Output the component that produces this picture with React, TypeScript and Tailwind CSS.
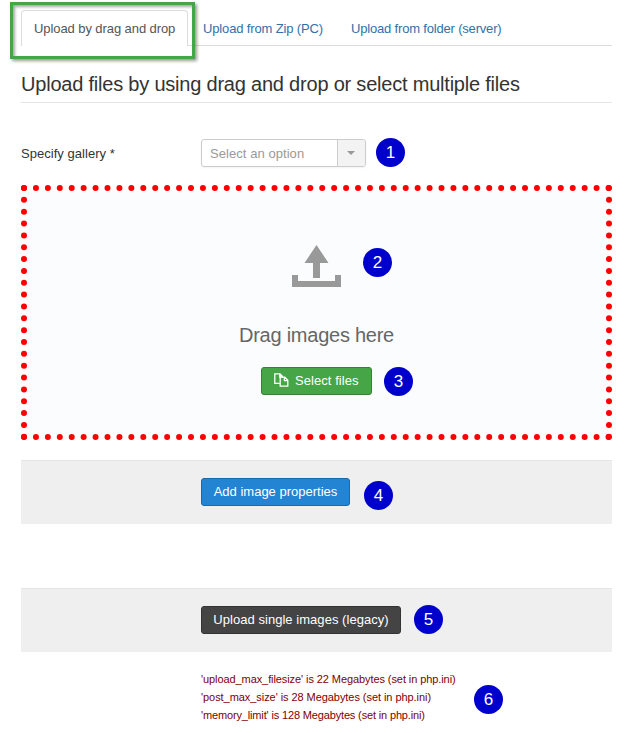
import React from "react";

function Badge({ n, className }: { n: number; className: string }) {
  return (
    <span
      className={`absolute flex size-[29px] items-center justify-center rounded-full bg-[#0000cc] text-[17px] leading-[29px] text-white ${className}`}
    >
      {n}
    </span>
  );
}

function UploadIcon() {
  return (
    <svg width="49" height="42" viewBox="0 0 49 42" fill="#999999" className="block">
      <path d="M24.5 0 36.5 18H28V33H21V18H12.5Z" />
      <path d="M0 30H6V36H43V30H49V42H0Z" />
    </svg>
  );
}

function FilesIcon() {
  return (
    <svg width="15" height="14" viewBox="0 0 15 14" fill="none" stroke="white" strokeWidth="1.3" className="block -translate-y-px">
      <path d="M5.8 10.4H.8V.8H6L8.8 3.6M5.8 .8V4H8.8" />
      <path d="M6.2 4.2H10.8L13.8 7.2V13.2H6.2ZM10.4 4.2V7.6H13.8" />
    </svg>
  );
}

export default function App() {
  return (
    <div className="relative h-[733px] w-[627px] overflow-hidden bg-white pl-[21px] pt-[10px] font-['Liberation_Sans',Arial,sans-serif] text-[13px] leading-[18px] text-[#333]">
      <div className="w-[591px]">
        <nav className="flex h-9 border-b border-[#ddd]">
          <div className="h-9 w-[167px] rounded-t border border-b-0 border-[#ddd] bg-white pl-3 pt-[9px] tracking-[-0.08px] whitespace-nowrap text-[#555]">
            Upload by drag and drop
          </div>
          <div className="ml-[15px] w-[148px] pt-[10px] tracking-[-0.14px] whitespace-nowrap text-[#3071a9]">
            Upload from Zip (PC)
          </div>
          <div className="pt-[10px] tracking-[-0.18px] whitespace-nowrap text-[#3071a9]">Upload from folder (server)</div>
        </nav>
        <h1 className="mt-[18px] h-[39px] border-b border-[#e5e5e5] text-[20px] leading-[40px] tracking-[-0.21px] whitespace-nowrap">
          Upload files by using drag and drop or select multiple files
        </h1>
        <div className="mt-9 flex h-[28px]">
          <label className="w-[180px] pt-[6px] tracking-[0.04px]">Specify gallery *</label>
          <div className="flex h-[28px] w-[165px] overflow-hidden rounded-[3px] border border-[#ccc] text-[#999] shadow-[0_1px_2px_rgba(0,0,0,0.05)]">
            <span className="flex-1 pl-2 pt-[5px] tracking-[0.06px]">Select an option</span>
            <span className="flex w-[28px] items-center border-l border-[#ccc] bg-[#f3f3f3] pl-[9px]">
              <svg width="8" height="4" viewBox="0 0 8 4" fill="#999" className="block">
                <path d="M0 0H8L4 4Z" />
              </svg>
            </span>
          </div>
        </div>
        <section className="mt-[18px] flex h-[255px] flex-col items-center border-[6px] border-dotted border-[#ff0000] bg-[#fafcfe] bg-clip-padding pt-[54px]">
          <UploadIcon />
          <p className="mt-[33px] text-[20px] leading-[30px] tracking-[-0.25px] text-[#666]">Drag images here</p>
          <button className="mt-[17px] flex h-[28px] w-[111px] items-center rounded-[3px] border border-[#378137] bg-[#46a546] pl-3 whitespace-nowrap text-white">
            <FilesIcon />
            <span className="ml-[6px] tracking-[0.06px]">Select files</span>
          </button>
        </section>
        <div className="mt-5 h-16 border-t border-[#e5e5e5] bg-[#efefef] pl-[180px] pt-[17px]">
          <button className="block h-[28px] w-[149px] rounded-[3px] border border-[#1a6aa8] bg-[#2384d3] whitespace-nowrap text-white">
            Add image properties
          </button>
        </div>
        <div className="mt-16 h-16 border-t border-[#e5e5e5] bg-[#efefef] pl-[180px] pt-[17px]">
          <button className="block h-[28px] w-[200px] rounded-[3px] border border-[#333] bg-[#444] tracking-[0.04px] whitespace-nowrap text-white">
            Upload single images (legacy)
          </button>
        </div>
        <div className="mt-[18px] pl-[180px] text-[11px] leading-[18px] whitespace-nowrap text-[#800000]">
          <p className="tracking-[-0.085px]">'upload_max_filesize' is 22 Megabytes (set in php.ini)</p>
          <p className="tracking-[-0.06px]">'post_max_size' is 28 Megabytes (set in php.ini)</p>
          <p className="tracking-[-0.15px]">'memory_limit' is 128 Megabytes (set in php.ini)</p>
        </div>
      </div>
      <div className="absolute left-[10px] top-[2px] h-[57px] w-[185px] border-[3px] border-[#46a546] shadow-[2px_2px_3px_rgba(0,0,0,0.4),inset_2px_2px_3px_rgba(0,0,0,0.35)]" />
      <Badge n={1} className="left-[376px] top-[138px]" />
      <Badge n={2} className="left-[363px] top-[248px]" />
      <Badge n={3} className="left-[384px] top-[367px]" />
      <Badge n={4} className="left-[364px] top-[481px]" />
      <Badge n={5} className="left-[414px] top-[605px]" />
      <Badge n={6} className="left-[474px] top-[685px]" />
    </div>
  );
}
